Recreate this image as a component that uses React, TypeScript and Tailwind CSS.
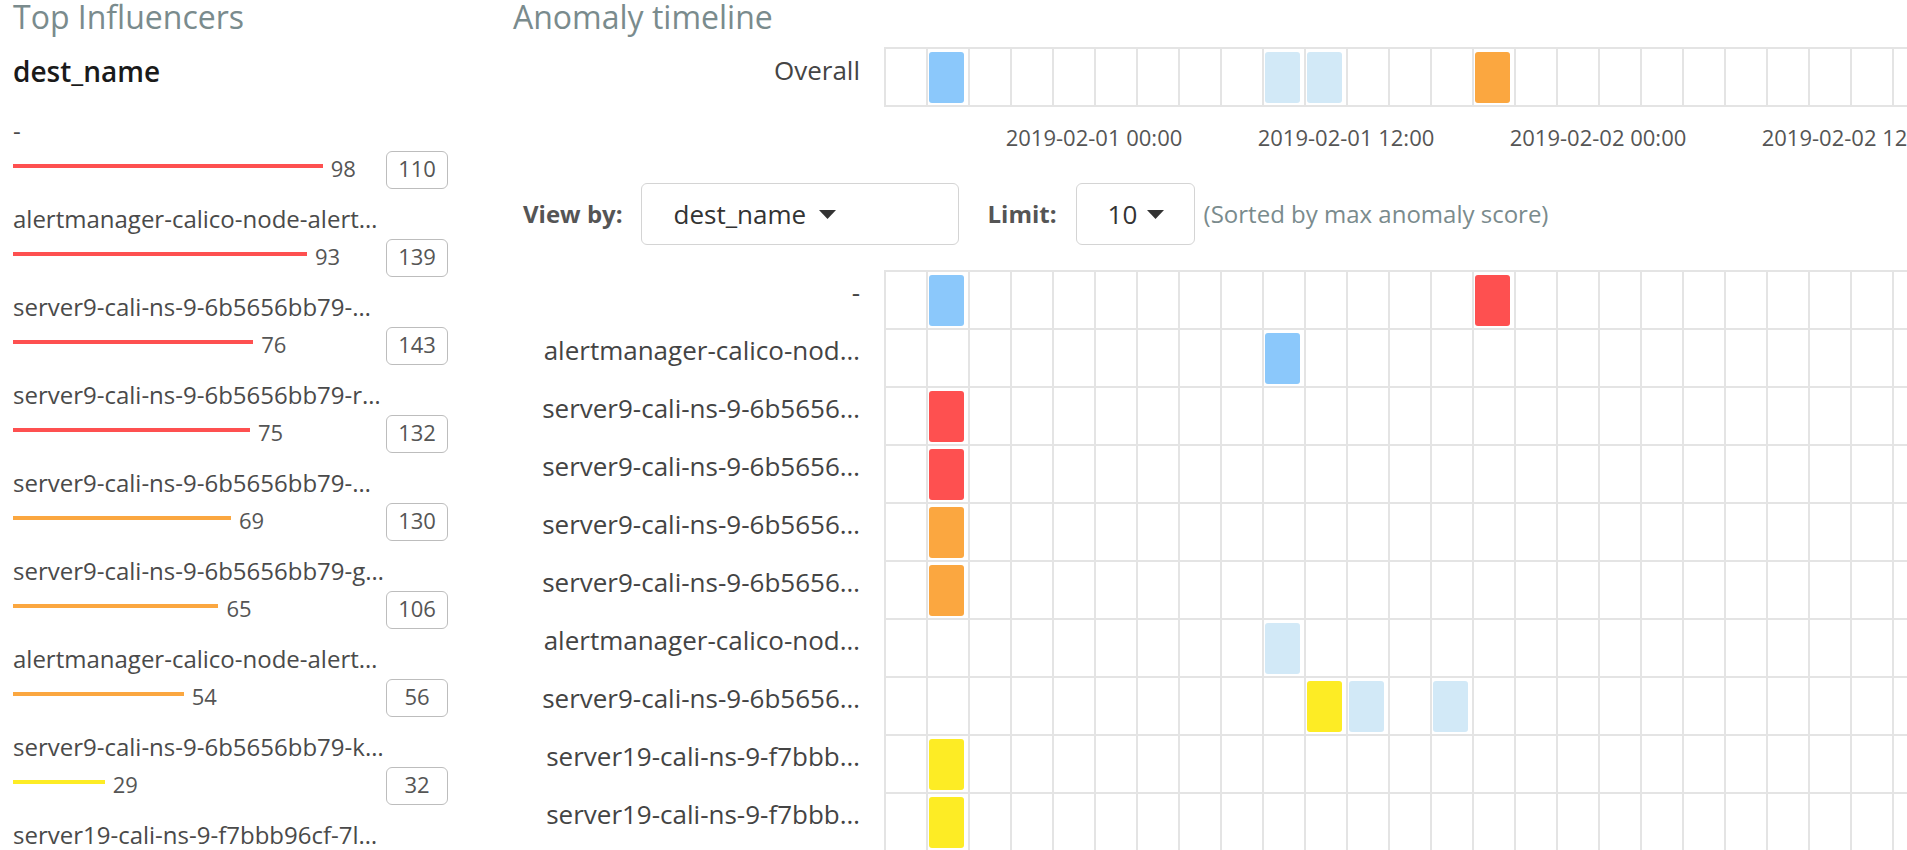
import React from "react";

type Influencer = { label: string; score: number; count: number };

const RED = "#fe5050";
const ORANGE = "#fba740";
const YELLOW = "#fdec25";
const BLUE = "#8bc8fb";
const PALE = "#d2e9f7";

const influencers: Influencer[] = [
  { label: "-", score: 98, count: 110 },
  { label: "alertmanager-calico-node-alert…", score: 93, count: 139 },
  { label: "server9-cali-ns-9-6b5656bb79-…", score: 76, count: 143 },
  { label: "server9-cali-ns-9-6b5656bb79-r…", score: 75, count: 132 },
  { label: "server9-cali-ns-9-6b5656bb79-…", score: 69, count: 130 },
  { label: "server9-cali-ns-9-6b5656bb79-g…", score: 65, count: 106 },
  { label: "alertmanager-calico-node-alert…", score: 54, count: 56 },
  { label: "server9-cali-ns-9-6b5656bb79-k…", score: 29, count: 32 },
  { label: "server19-cali-ns-9-f7bbb96cf-7l…", score: 21, count: 24 },
];

const overall: Record<number, string> = { 1: BLUE, 9: PALE, 10: PALE, 14: ORANGE };

const lanes: { label: string; cells: Record<number, string> }[] = [
  { label: "-", cells: { 1: BLUE, 14: RED } },
  { label: "alertmanager-calico-nod…", cells: { 9: BLUE } },
  { label: "server9-cali-ns-9-6b5656…", cells: { 1: RED } },
  { label: "server9-cali-ns-9-6b5656…", cells: { 1: RED } },
  { label: "server9-cali-ns-9-6b5656…", cells: { 1: ORANGE } },
  { label: "server9-cali-ns-9-6b5656…", cells: { 1: ORANGE } },
  { label: "alertmanager-calico-nod…", cells: { 9: PALE } },
  { label: "server9-cali-ns-9-6b5656…", cells: { 10: YELLOW, 11: PALE, 13: PALE } },
  { label: "server19-cali-ns-9-f7bbb…", cells: { 1: YELLOW } },
  { label: "server19-cali-ns-9-f7bbb…", cells: { 1: YELLOW } },
];

const COLS = 26;
const axisLabels = ["2019-02-01 00:00", "2019-02-01 12:00", "2019-02-02 00:00", "2019-02-02 12:00"];

function scoreColor(score: number) {
  if (score >= 75) return RED;
  if (score >= 50) return ORANGE;
  if (score >= 25) return YELLOW;
  return BLUE;
}

function Caret() {
  return (
    <svg width="17" height="9" viewBox="0 0 17 9" className="shrink-0">
      <path d="M0 0 L17 0 L8.5 9 Z" fill="#333" />
    </svg>
  );
}

function Cells({ cells }: { cells: Record<number, string> }) {
  return (
    <>
      {Array.from({ length: COLS }).map((_, i) => (
        <div key={i} className="w-[42px] h-[56px] shrink-0 border-l-2 border-[#e4e4e4]">
          {cells[i] && (
            <div
              className="ml-[1px] mt-[3px] w-[35px] h-[51px] rounded-[3px]"
              style={{ backgroundColor: cells[i] }}
            />
          )}
        </div>
      ))}
    </>
  );
}

function LaneRow({ label, cells }: { label: string; cells: Record<number, string> }) {
  return (
    <div className="flex">
      <div className="w-[371px] shrink-0 h-[58px] pr-[24px] pt-[6px] text-right text-[26px] leading-[32px] text-[#444] whitespace-nowrap">
        {label}
      </div>
      <div className="flex border-t-2 border-[#e4e4e4]">
        <Cells cells={cells} />
      </div>
    </div>
  );
}

export default function App() {
  return (
    <div className="w-[1907px] h-[850px] overflow-hidden bg-white flex font-['Open_Sans',sans-serif]">
      {/* influencers */}
      <div className="ml-[13px] w-[435px] shrink-0">
        <div className="text-[32px] leading-[34px] text-[#7a8b8d] whitespace-nowrap">Top Influencers</div>
        <div className="mt-[19px] text-[28px] leading-[36px] font-semibold text-[#1a1a1a]">dest_name</div>
        <div className="mt-[26px] flex flex-col gap-[14px]">
          {influencers.map((inf, i) => (
            <div key={i}>
              <div className="h-[32px] text-[24px] leading-[32px] text-[#4a4a4a] whitespace-nowrap">{inf.label}</div>
              <div className="mt-[4px] h-[38px] flex items-center">
                <div className="flex-1 flex items-center">
                  <div
                    className="h-[4px] mb-[8px]"
                    style={{ width: inf.score * 3.16, backgroundColor: scoreColor(inf.score) }}
                  />
                  <span className="ml-[8px] mb-[4px] text-[22px] leading-[30px] text-[#555]">{inf.score}</span>
                </div>
                <div className="w-[62px] h-[38px] border-[1.5px] border-[#bdbdbd] rounded-[6px] flex items-center justify-center pb-[3px] text-[22px] text-[#555]">
                  {inf.count}
                </div>
              </div>
            </div>
          ))}
        </div>
      </div>

      {/* timeline */}
      <div className="ml-[65px] flex-1 min-w-0">
        <div className="text-[32px] leading-[34px] text-[#7a8b8d] whitespace-nowrap">Anomaly timeline</div>

        <div className="mt-[13px] flex">
          <div className="w-[371px] shrink-0 h-[58px] pr-[24px] pt-[7px] text-right text-[26px] leading-[32px] text-[#444]">
            Overall
          </div>
          <div className="flex border-y-2 border-[#e4e4e4]">
            <Cells cells={overall} />
          </div>
        </div>

        <div className="mt-[15px] flex">
          <div className="w-[455px] shrink-0" />
          {axisLabels.map((t) => (
            <div key={t} className="w-[252px] shrink-0 text-center text-[22px] leading-[30px] text-[#555] whitespace-nowrap">
              {t}
            </div>
          ))}
        </div>

        <div className="mt-[31px] flex items-center h-[62px]">
          <span className="ml-[10px] text-[24px] font-bold text-[#555]">View by:</span>
          <div className="ml-[18px] w-[318px] h-[62px] border-[1.5px] border-[#d4d4d4] rounded-[6px] pl-[32px] flex items-center">
            <span className="text-[26px] text-[#333]">dest_name</span>
            <span className="ml-[13px]">
              <Caret />
            </span>
          </div>
          <span className="ml-[29px] text-[24px] font-bold text-[#555]">Limit:</span>
          <div className="ml-[19px] w-[119px] h-[62px] border-[1.5px] border-[#d4d4d4] rounded-[6px] pl-[31px] flex items-center">
            <span className="text-[26px] text-[#333]">10</span>
            <span className="ml-[10px]">
              <Caret />
            </span>
          </div>
          <span className="ml-[9px] text-[24px] text-[#7a8b8d] whitespace-nowrap">(Sorted by max anomaly score)</span>
        </div>

        <div className="mt-[25px]">
          {lanes.map((l, i) => (
            <LaneRow key={i} label={l.label} cells={l.cells} />
          ))}
        </div>
      </div>
    </div>
  );
}
